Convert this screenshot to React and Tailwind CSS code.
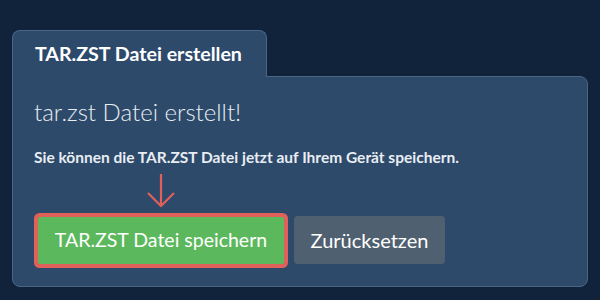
import React from 'react';

const App = () => {
  return (
    <div className="w-[600px] h-[300px] bg-[#10233a] pt-[30px] px-[12px] font-['Lato',sans-serif] overflow-hidden">
      {/* Tab header */}
      <div className="relative z-10 w-[255px] h-[47px] -mb-px bg-[#2d4a6b] border border-b-0 border-[#4b6585] rounded-t-lg flex items-center pl-[22px]">
        <span className="text-white font-bold text-[19.6px] whitespace-nowrap">TAR.ZST Datei erstellen</span>
      </div>

      {/* Panel body */}
      <div className="w-[576px] h-[211px] bg-[#2d4a6b] border border-[#4b6585] rounded-lg rounded-tl-none px-[21px] pt-[20px]">
        <h2 className="text-[#e8edf2] font-light text-[24px] leading-[30px] whitespace-nowrap">tar.zst Datei erstellt!</h2>
        <p className="mt-[20px] text-[#e8edf2] font-bold text-[15.5px] leading-[20px] whitespace-nowrap">
          Sie können die TAR.ZST Datei jetzt auf Ihrem Gerät speichern.
        </p>
        <div className="mt-[49px] flex items-center gap-[10px] pl-[4px]">
          <div className="relative">
            <svg className="absolute left-1/2 -translate-x-1/2 -top-[44px]" width="30" height="36" viewBox="0 0 30 36" fill="none" stroke="#e0605a" strokeWidth="2.2">
              <line x1="15" y1="1" x2="15" y2="33" />
              <polyline points="2,20 15,33 28,20" />
            </svg>
            <button className="h-[47px] w-[246px] bg-[#5cb85c] text-white text-[19.5px] rounded-[2px] ring-4 ring-[#e0605a]">
              TAR.ZST Datei speichern
            </button>
          </div>
          <button className="h-[48px] w-[151px] bg-[#4f6070] text-white text-[20px] rounded">
            Zurücksetzen
          </button>
        </div>
      </div>
    </div>
  );
};

export default App;
